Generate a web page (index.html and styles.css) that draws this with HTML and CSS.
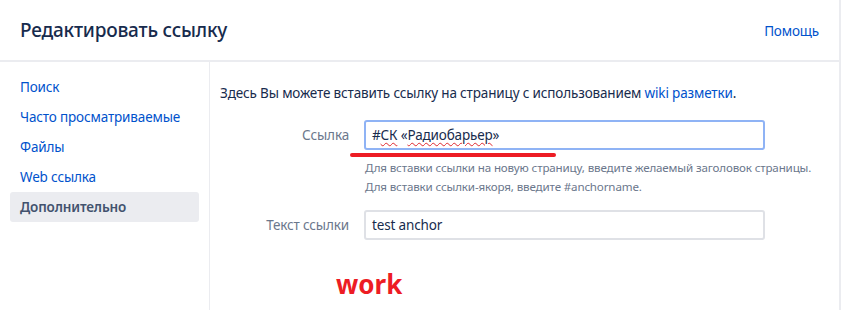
FILE: index.html
```html
<!DOCTYPE html>
<html lang="ru">
<head>
    <meta charset="UTF-8">
    <title>Редактировать ссылку</title>
    <link rel="stylesheet" href="styles.css">
</head>
<body>
    <div class="dialog">
        <div class="header">
            <h2>Редактировать ссылку</h2>
            <a href="#" class="help">Помощь</a>
        </div>

        <div class="body">
            <ul class="menu">
                <li><a href="#">Поиск</a></li>
                <li><a href="#">Часто просматриваемые</a></li>
                <li><a href="#">Файлы</a></li>
                <li><a href="#">Web ссылка</a></li>
                <li class="active"><a href="#">Дополнительно</a></li>
            </ul>

            <div class="panel">
                <p class="intro">Здесь Вы можете вставить ссылку на страницу с использованием <a href="#">wiki разметки</a>.</p>

                <div class="form-row">
                    <label>Ссылка</label>
                    <div class="field-wrap">
                        <div class="field focus">#<span class="typo">СК</span> «<span class="typo">Радиобарьер</span>»</div>
                        <div class="hint">Для вставки ссылки на новую страницу, введите желаемый заголовок страницы.</div>
                        <div class="hint">Для вставки ссылки-якоря, введите #anchorname.</div>
                    </div>
                    <div class="mark-line"></div>
                </div>

                <div class="form-row">
                    <label>Текст ссылки</label>
                    <div class="field-wrap">
                        <div class="field">test anchor</div>
                    </div>
                </div>

                <div class="mark-word">work</div>
            </div>
        </div>
    </div>
</body>
</html>
```

FILE: styles.css
```css
body {
    margin: 0;
    font-family: 'Segoe UI', 'Noto Sans', sans-serif;
    font-size: 13.5px;
    letter-spacing: -0.15px;
    color: #172b4d;
    background: white;
}
a {
    color: #0052cc;
    text-decoration: none;
}
.dialog {
    width: 839px;
    height: 310px;
    border-right: 2px solid #ebecf0;
    display: flex;
    flex-direction: column;
}
.header {
    height: 60px;
    padding: 0 20px;
    display: flex;
    align-items: center;
    justify-content: space-between;
    border-bottom: 2px solid #ebecf0;
}
.header h2 {
    margin: 0;
    font-size: 19px;
    font-weight: 500;
    letter-spacing: -0.2px;
    color: #172b4d;
}
.help {
    padding-top: 2px;
}
.body {
    flex: 1;
    display: flex;
}
.menu {
    flex: none;
    list-style: none;
    margin: 0;
    padding: 10px;
    width: 189px;
    border-right: 1px solid #ebecf0;
}
.menu li a {
    display: block;
    height: 30px;
    line-height: 30px;
    padding: 0 10px;
    border-radius: 3px;
    white-space: nowrap;
}
.menu li.active a {
    background: #ebecf0;
    color: #42526e;
    font-weight: 600;
}
.panel {
    flex: 1;
    padding: 21px 10px 0;
    position: relative;
}
.intro {
    margin: 0 0 17px;
    line-height: 20px;
}
.form-row {
    display: flex;
    align-items: flex-start;
    margin-bottom: 14px;
    position: relative;
}
.form-row label {
    width: 129px;
    margin-right: 15px;
    text-align: right;
    line-height: 30px;
    color: #6b778c;
}
.field-wrap {
    width: 401px;
}
.field {
    box-sizing: border-box;
    height: 30px;
    padding: 0 6px;
    line-height: 26px;
    border: 2px solid #dfe1e6;
    border-radius: 3px;
    color: #172b4d;
}
.field.focus {
    border-color: #8fb3f5;
}
.typo {
    text-decoration: underline wavy #e0282e;
    text-decoration-thickness: 1px;
    text-underline-offset: 2px;
}
.hint {
    font-size: 11.6px;
    line-height: 19px;
    color: #6b778c;
    padding-left: 1px;
    white-space: nowrap;
}
.field + .hint {
    margin-top: 8px;
}
.mark-line {
    position: absolute;
    left: 130px;
    top: 33px;
    width: 206px;
    height: 4px;
    border-radius: 2px;
    background: #ed1c24;
}
.mark-word {
    position: absolute;
    left: 126px;
    top: 204px;
    font-size: 26px;
    font-weight: 700;
    letter-spacing: 0;
    color: #ed1c24;
}
```
